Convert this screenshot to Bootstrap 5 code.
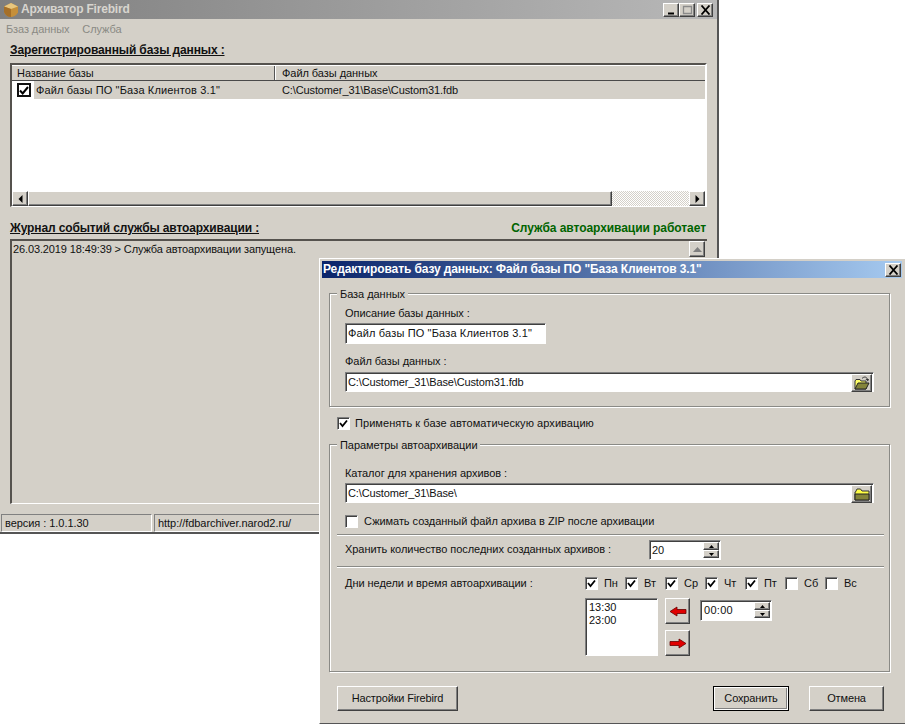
<!DOCTYPE html>
<html lang="ru"><head><meta charset="utf-8"><title>Архиватор Firebird</title>
<link href="https://cdn.jsdelivr.net/npm/bootstrap@5.3.0/dist/css/bootstrap.min.css" rel="stylesheet">
<style>
html,body{margin:0;height:724px;overflow:hidden;background:#fff}
body{font:11px/13px "Liberation Sans",Arial,sans-serif;color:#111;position:relative;letter-spacing:-.05px}
.w95{background:#d4d0c8;position:absolute}
.wmain{left:0;top:0;width:719px;height:534px;border-right:2px solid #555;border-bottom:2px solid #555}
.tbar{height:19px;display:flex;align-items:center;font-weight:700;font-size:12px;letter-spacing:-.2px;padding:0 4px 0 3px;background:linear-gradient(90deg,#7f7f7f,#b8b8b8);color:#d8d5cf}
.tbar svg{margin-right:2px}
.tbar .rz svg{margin-right:0}
.rz{width:16px;height:14px;padding:0;background:#d4d0c8;display:flex;align-items:center;justify-content:center}
.rz2{margin-left:2px}
.raised{border:1px solid;border-color:#fff #404040 #404040 #fff;box-shadow:inset -1px -1px 0 #808080}
.sunk{border:1px solid;border-color:#808080 #fff #fff #808080;box-shadow:inset 1px 1px 0 #404040}
.menub{height:19px;padding:1px 6px 0;color:#8a8a84;gap:13px;align-items:center;font-size:11px;letter-spacing:-.1px}
.sect{padding:0 10px}
.hd{font-weight:700;font-size:12px;letter-spacing:-.13px;text-decoration:underline;color:#111;height:13px;line-height:13px}
.hd1{margin:6px 0 6px}
.grid{height:144px;background:#fff;display:flex;flex-direction:column;border-width:2px 2px 1px 2px;border-style:solid;border-color:#55524e #fff #fff #55524e;box-shadow:none}
.ghead{height:16px;background:#d4d0c8;border-top:1px solid #fff;border-bottom:1px solid #4a4a4a;display:flex;line-height:14px}
.gc1{width:263px;padding-left:5px;flex:none}
.gc2{border-left:1px solid #fff;padding-left:6px;box-shadow:-1px 0 0 #555}
.grow{height:18px;display:flex;align-items:center}
.gbox{width:14px;height:14px;margin:0 3px 0 5px;border:2px solid #111;background:#fff;display:flex;align-items:center;justify-content:center;flex:none}
.gtxt{background:#d4d0c8;flex:1;display:flex;height:18px;align-items:center;padding-left:2px}
.gtxt1{width:246px;flex:none;letter-spacing:.15px}
.gtxt2{letter-spacing:-.12px}
.gspace{flex:1}
.hbar{height:16px;display:flex;background:#fff;border-top:1px solid #fff}
.sbt{width:16px;height:15px;background:#d4d0c8;display:flex;align-items:center;justify-content:center;flex:none}
.sthumb{width:584px;height:15px;background:#d4d0c8}
.strack{flex:1;height:15px;background:repeating-conic-gradient(#d4d0c8 0 25%,#fff 0 50%) 0 0/2px 2px}
.hdrow{margin:15px 0 4px;display:flex;justify-content:space-between}
.okst{color:#006400;font-weight:700;font-size:12px;line-height:13px;letter-spacing:-.06px;margin-right:1px}
.logb{height:265px;border-width:2px 0 1px 2px;border-style:solid;border-color:#55524e #fff #fff #55524e;padding:2px 1px;position:relative;line-height:13px;letter-spacing:-.12px}
.logup{position:absolute;right:2px;top:0;width:16px;height:16px;background:#d4d0c8}
.stb{display:flex;gap:2px;padding-left:1px;margin-top:10px;height:18px;line-height:16px}
.stp{border:1px solid;border-color:#808080 #fff #fff #808080;height:18px;padding-left:3px}
.sp1{width:151px}.sp2{width:300px}
.dlg{left:319px;top:258px;width:586px;height:466px;border-left:1px solid #fff;border-top:1px solid #fff;border-bottom:1px solid #555;box-shadow:inset 1px 0 0 #d4d0c8}
.dtbar{margin:2px 3px 0 2px;height:17px;display:flex;align-items:center;font-weight:700;font-size:12px;letter-spacing:-.12px;color:#fff;padding:0 1px 0 1px;background:linear-gradient(90deg,#0a246a,#a6caf0)}
.gbx{position:relative;margin-left:9px;width:561px;border:1px solid #8a8a86;box-shadow:1px 1px 0 #fff,inset 1px 1px 0 #fff}
.gb1{height:114px;margin-top:15px;padding:13px 15px 0 15px}
.gb2{height:228px;padding:22px 5px 0 7px}
.glg{position:absolute;left:7px;top:-6px;background:#d4d0c8;padding:0 3px;line-height:12px;height:12px}
.lb{height:13px;line-height:13px}
.fld{height:21px;background:#fff;display:flex;align-items:center;padding:0 2px;line-height:13px;position:relative;letter-spacing:-.13px}
.f1{width:201px;margin-top:3px;margin-bottom:11px;letter-spacing:.15px}
.f2{width:529px;margin-top:4px;height:20px}
.f3{margin-top:3px}
.fbtn{position:absolute;right:1px;top:1px;width:21px;height:18px;display:flex;align-items:center;justify-content:center;background:#d4d0c8;padding:0}
.ckr{display:flex;align-items:center;gap:5px;height:13px}
.ck{width:13px;height:13px;background:#fff;display:flex;align-items:center;justify-content:center;flex:none;border:1px solid;border-color:#808080 #fff #fff #808080;box-shadow:inset 1px 1px 0 #404040}
.ck0{margin:10px 0 14px 17px;letter-spacing:.06px}
.ck2{margin:12px 0 6px 0;gap:6px}
.sep{height:2px;background:#8a8a86;border-bottom:1px solid #fff}
.inset{padding-left:8px}
.keep{height:30px;display:flex;align-items:flex-start;padding-top:4px}
.keep>span{width:304px;flex:none;margin-top:3px}
.spin{display:flex;background:#fff;position:relative;padding-left:2px;align-items:center}
.spw{width:72px;height:20px}
.spb{position:absolute;right:1px;top:1px;width:16px;height:16px;display:flex;flex-direction:column;justify-content:space-between}
.spb div{height:8px;width:16px;background:#d4d0c8;display:flex;align-items:center;justify-content:center}
.days{display:flex;padding-top:9px;height:32px}
.days>span{width:240px;flex:none;line-height:12px}
.dayl{display:flex;font-size:11px}
.ckd{width:40px;gap:6px}
.tm{display:flex;padding-left:248px;margin-top:-2px}
.lst{width:73px;height:58px;background:#fff;padding:2px 3px;line-height:13px}
.arw{display:flex;flex-direction:column;gap:6px;margin-left:7px}
.abt{width:25px;height:26px;background:#d4d0c8;display:flex;align-items:center;justify-content:center;padding:0}
.sp3{margin-left:10px;margin-top:2px;height:21px;width:72px;letter-spacing:.3px;padding-left:3px}
.acts{display:flex;margin:14px 0 0 17px;height:25px}
.dbt{height:25px;line-height:21px;padding:0;font-size:11px;color:#111;background:#d4d0c8;border-radius:0}
.btn.dbt{--bs-btn-font-size:11px;--bs-btn-line-height:21px;--bs-btn-padding-x:0;--bs-btn-padding-y:0;letter-spacing:-.15px}
.bt1{width:121px}
.bt2{width:76px;margin-left:auto;border:1px solid #000;outline:1px solid #fff;outline-offset:-2px;box-shadow:inset -2px -2px 0 #808080}
.bt3{width:75px;margin-left:20px;margin-right:21px}
</style></head><body>

<div class="w95 wmain">
 <div class="tbar">
  <svg width="16" height="16" viewBox="0 0 16 16"><path d="M8 1 15 4.500V10.500C13 14 10 15 8 15 5 15 2 13 1 10V4.500Z" fill="#c58f3a"/><path d="M1 4.500 8 1 15 4.500 8 7Z" fill="#e8c67e"/><path d="M8 7V15C5 15 2 13 1 10V4.500Z" fill="#a56f28"/></svg>
  <span class="flex-grow-1">Архиватор Firebird</span>
  <div class="d-flex">
   <div class="rz raised"><svg width="11" height="10" viewBox="0 0 11 10"><path d="M2 7.500H8V9.500H2Z" fill="#000"/></svg></div>
   <div class="rz raised"><svg width="11" height="10" viewBox="0 0 11 10"><path d="M1.500 1.500H9.500V8.500H1.500Z" fill="none" stroke="#8a8a8a" stroke-width="1.300"/></svg></div>
   <div class="rz raised rz2"><svg width="11" height="10" viewBox="0 0 11 10"><path d="M1.500 .5 9.500 9.500M9.500 .5 1.500 9.500" stroke="#000" stroke-width="1.800"/></svg></div>
  </div>
 </div>
 <div class="menub d-flex"><span>Бзаз данных</span><span>Служба</span></div>
 <div class="sect">
  <div class="hd hd1">Зарегистрированный базы данных :</div>
  <div class="grid">
   <div class="ghead"><div class="gc1">Название базы</div><div class="gc2">Файл базы данных</div></div>
   <div class="grow">
    <div class="gbox"><svg width="10" height="9" viewBox="0 0 10 9"><path d="M1 4.500 3.700 7.500 9 1" fill="none" stroke="#000" stroke-width="2"/></svg></div>
    <div class="gtxt"><span class="gtxt1">Файл базы ПО "База Клиентов 3.1"</span><span class="gtxt2">C:\Customer_31\Base\Custom31.fdb</span></div>
   </div>
   <div class="gspace"></div>
   <div class="hbar">
    <div class="sbt raised"><svg width="5" height="8" viewBox="0 0 5 8"><path d="M4.500 0V8L.5 4Z" fill="#000"/></svg></div>
    <div class="sthumb raised"></div>
    <div class="strack"></div>
    <div class="sbt raised"><svg width="5" height="8" viewBox="0 0 5 8"><path d="M.5 0V8L4.500 4Z" fill="#000"/></svg></div>
   </div>
  </div>
  <div class="hdrow"><span class="hd">Журнал событий службы автоархивации :</span><span class="okst">Служба автоархивации работает</span></div>
  <div class="logb">26.03.2019 18:49:39 &gt; Служба автоархивации запущена.
   <div class="logup raised d-flex align-items-center justify-content-center"><svg width="9" height="5" viewBox="0 0 9 5"><path d="M4.500 0 9 5H0Z" fill="#808080"/></svg></div>
  </div>
 </div>
 <div class="stb"><div class="stp sp1">версия : 1.0.1.30</div><div class="stp sp2">http://fdbarchiver.narod2.ru/</div></div>
</div>

<div class="w95 dlg">
 <div class="dtbar"><span class="flex-grow-1">Редактировать базу данных: Файл базы ПО "База Клиентов 3.1"</span>
  <div class="rz raised"><svg width="11" height="10" viewBox="0 0 11 10"><path d="M1.500 .5 9.500 9.500M9.500 .5 1.500 9.500" stroke="#000" stroke-width="1.800"/></svg></div>
 </div>
 <div class="gbx gb1"><span class="glg">База данных</span>
  <div class="lb">Описание базы данных :</div>
  <div class="fld sunk f1">Файл базы ПО "База Клиентов 3.1"</div>
  <div class="lb">Файл базы данных :</div>
  <div class="fld sunk f2">C:\Customer_31\Base\Custom31.fdb
   <div class="fbtn raised"><svg width="16" height="14" viewBox="0 0 16 14"><path d="M1 5V13H12V5H7L6 3.500H2Z" fill="#ffff66" stroke="#333"/><path d="M1 13 4 7H15L12 13Z" fill="#84843a" stroke="#222"/><path d="M8 2.500C10 .5 12 .5 13.500 3" fill="none" stroke="#333"/><path d="M11.500 3H15L14 5.500Z" fill="#333"/></svg></div>
  </div>
 </div>
 <div class="ckr ck0"><div class="ck"><svg width="9" height="9" viewBox="0 0 9 9"><path d="M1 4 3.500 7 8 1.500" fill="none" stroke="#000" stroke-width="1.800"/></svg></div><span>Применять к базе автоматическую архивацию</span></div>
 <div class="gbx gb2"><span class="glg">Параметры автоархивации</span>
  <div class="inset">
   <div class="lb">Каталог для хранения архивов :</div>
   <div class="fld sunk f2 f3">C:\Customer_31\Base\
    <div class="fbtn raised"><svg width="16" height="13" viewBox="0 0 16 13"><path d="M1 4V12H15V3H8L6.500 1H3L1.500 4Z" fill="#ffff44" stroke="#333"/><path d="M1 6H15V12H1Z" fill="#84843a" stroke="#222"/></svg></div>
   </div>
   <div class="ckr ck2"><div class="ck"></div><span>Сжимать созданный файл архива в ZIP после архивации</span></div>
  </div>
  <div class="sep"></div>
  <div class="keep inset"><span>Хранить количество последних созданных архивов :</span>
   <div class="spin sunk spw">20<div class="spb"><div class="raised"><svg width="5" height="3" viewBox="0 0 5 3"><path d="M2.500 0 5 3H0Z"/></svg></div><div class="raised"><svg width="5" height="3" viewBox="0 0 5 3"><path d="M0 0H5L2.500 3Z"/></svg></div></div></div>
  </div>
  <div class="sep"></div>
  <div class="days inset"><span>Дни недели и время автоархивации :</span>
   <div class="dayl">
    <div class="ckr ckd"><div class="ck"><svg width="9" height="9" viewBox="0 0 9 9"><path d="M1 4 3.500 7 8 1.500" fill="none" stroke="#000" stroke-width="1.800"/></svg></div><span>Пн</span></div>
    <div class="ckr ckd"><div class="ck"><svg width="9" height="9" viewBox="0 0 9 9"><path d="M1 4 3.500 7 8 1.500" fill="none" stroke="#000" stroke-width="1.800"/></svg></div><span>Вт</span></div>
    <div class="ckr ckd"><div class="ck"><svg width="9" height="9" viewBox="0 0 9 9"><path d="M1 4 3.500 7 8 1.500" fill="none" stroke="#000" stroke-width="1.800"/></svg></div><span>Ср</span></div>
    <div class="ckr ckd"><div class="ck"><svg width="9" height="9" viewBox="0 0 9 9"><path d="M1 4 3.500 7 8 1.500" fill="none" stroke="#000" stroke-width="1.800"/></svg></div><span>Чт</span></div>
    <div class="ckr ckd"><div class="ck"><svg width="9" height="9" viewBox="0 0 9 9"><path d="M1 4 3.500 7 8 1.500" fill="none" stroke="#000" stroke-width="1.800"/></svg></div><span>Пт</span></div>
    <div class="ckr ckd"><div class="ck"></div><span>Сб</span></div>
    <div class="ckr ckd"><div class="ck"></div><span>Вс</span></div>
   </div>
  </div>
  <div class="tm">
   <div class="lst sunk">13:30<br>23:00</div>
   <div class="arw">
    <div class="abt raised"><svg width="18" height="11" viewBox="0 0 18 11"><path d="M1 5.500 8 1V3.500H17V7.500H8V10Z" fill="#e00000" stroke="#600" stroke-width=".8"/></svg></div>
    <div class="abt raised"><svg width="18" height="11" viewBox="0 0 18 11"><path d="M17 5.500 10 1V3.500H1V7.500H10V10Z" fill="#e00000" stroke="#600" stroke-width=".8"/></svg></div>
   </div>
   <div class="spin sunk sp3">00:00<div class="spb"><div class="raised"><svg width="5" height="3" viewBox="0 0 5 3"><path d="M2.500 0 5 3H0Z"/></svg></div><div class="raised"><svg width="5" height="3" viewBox="0 0 5 3"><path d="M0 0H5L2.500 3Z"/></svg></div></div></div>
  </div>
 </div>
 <div class="acts">
  <button class="btn dbt raised bt1">Настройки Firebird</button>
  <button class="btn dbt bt2">Сохранить</button>
  <button class="btn dbt raised bt3">Отмена</button>
 </div>
</div>
</body></html>
